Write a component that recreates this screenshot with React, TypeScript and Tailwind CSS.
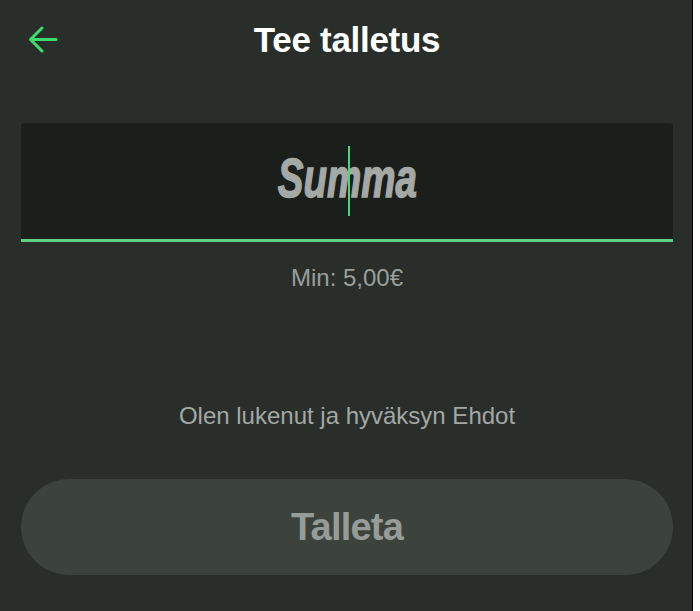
import { useState } from "react";

function BackArrow() {
  return (
    <svg width="30" height="29" viewBox="0 0 30 29" fill="none" aria-hidden>
      <path
        d="M28 14.5H2.5M14 3L2.5 14.5L14 26"
        stroke="#3ddc6c"
        strokeWidth="3"
        strokeLinecap="round"
        strokeLinejoin="round"
      />
    </svg>
  );
}

export default function App() {
  const [amount, setAmount] = useState("");

  return (
    <div className="flex min-h-[611px] bg-white font-['Liberation_Sans',Arial,sans-serif]">
      <div className="flex w-[693px] flex-col border-r border-black bg-[#292e2a] pl-[21px] pr-[19px]">
        {/* header */}
        <header className="grid h-[80px] grid-cols-[1fr_auto_1fr] items-center">
          <button className="ml-[7px] mt-[-2px] flex w-fit items-center">
            <BackArrow />
          </button>
          <h1 className="text-[35px] font-bold tracking-[-0.3px] text-white">Tee talletus</h1>
          <div />
        </header>

        {/* amount input */}
        <div className="relative mt-[43px] flex h-[119px] items-center justify-center rounded-t-[4px] border-b-[3px] border-[#5fd283] bg-[#1b1f1c]">
          {amount === "" && (
            <span className="mt-[-6px] inline-block scale-x-[0.7] text-[55px] font-bold italic leading-none text-[#a4a9a5] [-webkit-text-stroke:1.5px_#a4a9a5]">
              Summa
            </span>
          )}
          <input
            value={amount}
            onChange={(e) => setAmount(e.target.value)}
            className="absolute inset-0 bg-transparent text-center text-[55px] font-bold text-white outline-none"
          />
          <span className="absolute left-[327px] top-[23px] h-[70px] w-[2px] bg-[#4cd57a]" />
        </div>

        <p className="mt-[22px] text-center text-[24px] leading-[28px] text-[#9a9f9b]">Min: 5,00€</p>

        <p className="mt-[110px] text-center text-[24px] leading-[28px] text-[#a3a8a4]">
          Olen lukenut ja hyväksyn Ehdot
        </p>

        <button
          disabled
          className="mt-[49px] flex h-[96px] w-full items-center justify-center rounded-full bg-[#3b433c] text-[38px] font-bold tracking-[-0.8px] text-[#969c97]"
        >
          Talleta
        </button>
      </div>
    </div>
  );
}
